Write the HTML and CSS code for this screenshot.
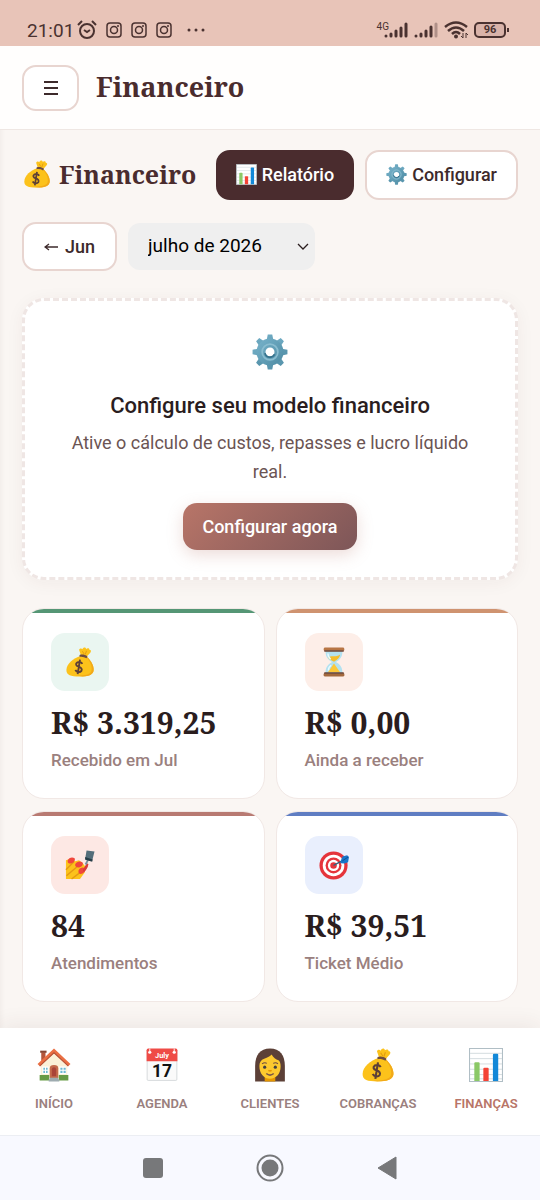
FILE: index.html
```html
<!DOCTYPE html>
<html lang="pt-BR">
<head>
    <meta charset="UTF-8">
    <meta name="viewport" content="width=device-width, initial-scale=1.0">
    <title>Financeiro</title>
    <link rel="stylesheet" href="styles.css">
</head>
<body>
    <!-- icons -->
    <svg class="sprite" aria-hidden="true">
        <linearGradient id="gearFill" x1="0" y1="0" x2="1" y2="1">
            <stop offset="0" stop-color="#78b3cb"/>
            <stop offset="1" stop-color="#4d8ba3"/>
        </linearGradient>
        <symbol id="bag" viewBox="0 0 64 64">
            <path d="M30 6c2-4 6-3 7-1 2-5 7-5 8-1 3-2 7-2 7 2 4 0 4 4 2 6l-8 9-12-3z" fill="#fcc21b"/>
            <path d="M37 9l4 6M46 8l-3 8" stroke="#e09a12" stroke-width="2" fill="none"/>
            <path d="M33 19C18 23 3 36 3 49c0 11 9 14 28 14s29-4 30-13c1-11-6-21-15-29z" fill="#fcc21b"/>
            <path d="M46 22c8 9 13 20 10 30-4 8-18 9-34 9 26 5 38-2 39-11 1-10-6-21-14-29z" fill="#f2a91a"/>
            <path d="M31 17c5-2 12-1 17 3l-2 4c-5-3-10-4-15-3z" fill="#6d4c41"/>
            <path d="M37 36c-2-4-7-5-11-3-4 3-3 7 3 9s8 5 6 9c-3 4-10 3-13-2M32 27l-5 31" stroke="#5d4037" stroke-width="4" fill="none"/>
        </symbol>
        <symbol id="chart" viewBox="0 0 64 64">
            <path d="M1 1h62v62H1z" fill="#fff" stroke="#b0bec5" stroke-width="2"/>
            <path d="M2 10h60M2 20h60M2 30h60M2 40h60M2 50h60M2 58h60" stroke="#b0bec5" stroke-width="1"/>
            <path d="M10 62V29q0-2 2-2h6q2 0 2 2v33z" fill="#8bc866"/>
            <path d="M27 62V39q0-2 2-2h6q2 0 2 2v23z" fill="#f44336"/>
            <path d="M45 62V13q0-2 2-2h6q2 0 2 2v49z" fill="#1288d8"/>
        </symbol>
        <symbol id="gear" viewBox="0 0 64 64">
            <g fill="url(#gearFill)">
                <path id="teeth" d="M26 11l2-10h8l2 10zM26 53l2 10h8l2-10zM11 26L1 28v8l10 2zM53 26l10 2v8l-10 2z"/>
                <use href="#teeth" transform="rotate(45 32 32)"/>
                <path fill-rule="evenodd" d="M32 8a24 24 0 1 0 0 48 24 24 0 0 0 0-48zm0 16a8 8 0 1 1 0 16 8 8 0 0 1 0-16z"/>
            </g>
            <circle cx="32" cy="32" r="14" fill="none" stroke="#8abdd0" stroke-width="3"/>
            <path d="M23 34a9 9 0 0 0 17 2" fill="none" stroke="#34718c" stroke-width="3"/>
        </symbol>
        <symbol id="hourglass" viewBox="0 0 64 64">
            <path d="M14 8h36c0 13-4 18-14 24 10 6 14 11 14 24H14c0-13 4-18 14-24C18 26 14 21 14 8z" fill="#b3e1f0"/>
            <path d="M19 22c8-5 17 1 26-6-1 8-7 11-12 15h-2c-5-3-9-4-12-9z" fill="#f5bd2c"/>
            <path d="M32 35l13 19H19z" fill="#fbc83a"/>
            <path d="M19 14c0 6 2 9 6 12M20 50c0-6 3-9 6-11" fill="none" stroke="#e8fbff" stroke-width="3"/>
            <rect x="10" y="1" width="44" height="8" rx="3" fill="#b87544"/>
            <rect x="11" y="7" width="42" height="3" rx="1" fill="#6d4c41"/>
            <rect x="10" y="55" width="44" height="8" rx="3" fill="#a3683d"/>
            <rect x="11" y="54" width="42" height="3" rx="1" fill="#6d4c41"/>
        </symbol>
        <symbol id="nails" viewBox="0 0 64 64">
            <path d="M2 62V22l10-4 10 6 8-2 8 6 6 8-2 12-10 14z" fill="#fcc21b"/>
            <path d="M2 42l17-17M3 55l26-22M14 62l22-17" stroke="#e59a12" stroke-width="3" fill="none"/>
            <path d="M6 22c2-6 10-8 15-4 1 6-4 11-12 11-3-1-4-4-3-7zM22 30c3-6 11-7 16-3 1 6-4 11-12 10-4-1-5-4-4-7zM29 43c3-6 9-7 14-4 2 6-3 12-10 12-4-1-5-4-4-8z" fill="#f0463c"/>
            <path d="M38 42c3-6 6-8 8-14l4 2c-1 8-5 14-10 17z" fill="#d93a3a"/>
            <path d="M44 31l5-10" stroke="#78909c" stroke-width="4"/>
            <path d="M46 1l17 2-5 20-15-4z" fill="#546e7a"/>
            <path d="M43 15l16 5-1 5-15-4z" fill="#263e48"/>
        </symbol>
        <symbol id="target" viewBox="0 0 64 64">
            <circle cx="31" cy="33" r="30" fill="#e5343b"/>
            <circle cx="31" cy="33" r="23" fill="#fff"/>
            <circle cx="31" cy="33" r="17" fill="#e5343b"/>
            <circle cx="31" cy="33" r="12" fill="#fff"/>
            <circle cx="31" cy="33" r="7" fill="#e5343b"/>
            <path d="M31 33l20-11" stroke="#35657c" stroke-width="3"/>
            <path d="M46 24l4-10 10-3 4 4-2 11-8 3-8-1z" fill="#1976c9"/>
            <path d="M50 23l12-8" stroke="#0d4f91" stroke-width="2"/>
        </symbol>
        <symbol id="house" viewBox="0 0 64 64">
            <path d="M8 8h8v16H8z" fill="#b5553a"/>
            <path d="M6 5h12v4H6z" fill="#874431"/>
            <path d="M7 27L32 5l25 22v30H7z" fill="#fbf1d8"/>
            <path d="M1 30L32 1l31 29-4 4L32 9 5 34z" fill="#ea6f43"/>
            <path d="M5 34L32 9l27 25" fill="none" stroke="#b54d33" stroke-width="2"/>
            <path d="M10 35h12v14H10zM42 35h13v14H42z" fill="#fff"/>
            <path d="M12 37h3v4h-3zM17 37h3v4h-3zM12 43h3v4h-3zM17 43h3v4h-3zM44 37h4v4h-4zM50 37h4v4h-4zM44 43h4v4h-4zM50 43h4v4h-4z" fill="#6fb9cf"/>
            <path d="M24 57V38q0-6 8-6t8 6v19z" fill="#c46a4b"/>
            <path d="M28 53V40q0-4 4-4t4 4v13z" fill="#a94438"/>
            <path d="M5 51h18v10H5zM41 51h18v10H41z" fill="#679b45"/>
            <path d="M24 56h16v3h2v4H22v-4h2z" fill="#9eabb0"/>
        </symbol>
        <symbol id="woman" viewBox="0 0 64 64">
            <path d="M32 1C13 1 4 14 4 34v29h56V34C60 14 51 1 32 1z" fill="#5c4037"/>
            <path d="M22 50h20v13H22z" fill="#e59600"/>
            <path d="M12 34c0-7 3-12 9-14 7-2 11-5 14-8 3 6 8 9 13 11 3 2 4 6 4 12 0 14-9 23-20 23S12 49 12 34z" fill="#fcc92f"/>
            <circle cx="22" cy="36" r="3" fill="#404040"/>
            <circle cx="42" cy="36" r="3" fill="#404040"/>
            <path d="M17 30q5-4 9-1M38 29q5-3 9 1" fill="none" stroke="#6d4c41" stroke-width="2"/>
            <path d="M29 42q3 2 6 0" fill="none" stroke="#e59600" stroke-width="3"/>
            <path d="M25 48q7 6 14 0" fill="none" stroke="#795548" stroke-width="3"/>
        </symbol>
        <symbol id="insta" viewBox="0 0 16 16">
            <g fill="none" stroke="currentColor" stroke-width="1.5">
                <rect x="1" y="1" width="14" height="14" rx="3"/>
                <circle cx="8" cy="8" r="3.5"/>
            </g>
            <circle cx="12" cy="4" r="1" fill="currentColor"/>
        </symbol>
    </svg>

    <div class="status-bar">
        <div class="status-left">
            <span class="clock">21:01</span>
            <svg class="alarm" viewBox="0 0 20 20">
                <g fill="none" stroke="currentColor" stroke-width="2">
                    <circle cx="10" cy="11" r="7"/>
                    <path d="M1 5l4-4M19 5l-4-4M7 10l3 2 3-2"/>
                </g>
            </svg>
            <svg class="insta"><use href="#insta"/></svg>
            <svg class="insta"><use href="#insta"/></svg>
            <svg class="insta"><use href="#insta"/></svg>
            <svg class="more" viewBox="0 0 18 4" fill="currentColor">
                <circle cx="2" cy="2" r="1.5"/><circle cx="9" cy="2" r="1.5"/><circle cx="16" cy="2" r="1.5"/>
            </svg>
        </div>
        <div class="status-right">
            <span class="network">4G</span>
            <svg class="signal" viewBox="0 0 24 16" stroke="currentColor" stroke-width="3" stroke-linecap="round">
                <path d="M2 14v0M7 14v-2M12 14V9M17 14V6M22 14V2"/>
            </svg>
            <svg class="signal signal-second" viewBox="0 0 24 16" stroke="currentColor" stroke-width="3" stroke-linecap="round">
                <path d="M2 14v0M7 14v-2M12 14V9M17 14V5"/>
                <path d="M22 14V2" opacity=".35"/>
            </svg>
            <svg class="wifi" viewBox="0 0 24 18">
                <g fill="none" stroke="currentColor" stroke-width="2.5">
                    <path d="M1 6q11-9 22 0M4 10q8-7 16 0M8 13q4-4 8 0"/>
                </g>
                <circle cx="12" cy="15.5" r="2" fill="currentColor"/>
                <path d="M19 12v5l-2-2M22 17v-5l2 2" stroke="currentColor" fill="none"/>
            </svg>
            <span class="battery">96</span>
        </div>
    </div>

    <header class="topbar">
        <button type="button" class="btn menu-btn" aria-label="Menu">
            <svg viewBox="0 0 14 14" stroke="currentColor" stroke-width="2"><path d="M0 1h14M0 7h14M0 13h14"/></svg>
        </button>
        <h1 class="topbar-title">Financeiro</h1>
    </header>

    <main class="page">
        <div class="page-header">
            <h2 class="page-title"><svg class="title-icon"><use href="#bag"/></svg>Financeiro</h2>
            <button type="button" class="btn btn-dark"><svg class="btn-icon"><use href="#chart"/></svg>Relatório</button>
            <button type="button" class="btn"><svg class="btn-icon"><use href="#gear"/></svg>Configurar</button>
        </div>

        <div class="month-nav">
            <button type="button" class="btn month-btn"><svg class="arrow" viewBox="0 0 14 8"><path d="M14 4H2M5 1L1 4l4 3" fill="none" stroke="currentColor" stroke-width="1.3"/></svg>Jun</button>
            <div class="month-field">
                <select class="month-select" aria-label="Mês">
                    <option>julho de 2026</option>
                </select>
                <svg class="chevron" viewBox="0 0 12 7"><path d="M1 1l5 5 5-5" fill="none" stroke="currentColor" stroke-width="1.3"/></svg>
            </div>
        </div>

        <section class="setup">
            <svg class="setup-icon"><use href="#gear"/></svg>
            <h3>Configure seu modelo financeiro</h3>
            <p>Ative o cálculo de custos, repasses e lucro líquido real.</p>
            <button type="button" class="setup-btn">Configurar agora</button>
        </section>

        <section class="stats">
            <div class="stat green">
                <div class="stat-icon"><svg><use href="#bag"/></svg></div>
                <div class="stat-value">R$ 3.319,25</div>
                <div class="stat-label">Recebido em Jul</div>
            </div>
            <div class="stat orange">
                <div class="stat-icon"><svg><use href="#hourglass"/></svg></div>
                <div class="stat-value">R$ 0,00</div>
                <div class="stat-label">Ainda a receber</div>
            </div>
            <div class="stat rose">
                <div class="stat-icon"><svg><use href="#nails"/></svg></div>
                <div class="stat-value">84</div>
                <div class="stat-label">Atendimentos</div>
            </div>
            <div class="stat blue">
                <div class="stat-icon"><svg><use href="#target"/></svg></div>
                <div class="stat-value">R$ 39,51</div>
                <div class="stat-label">Ticket Médio</div>
            </div>
        </section>
    </main>

    <nav class="bottom-nav">
        <a href="#inicio"><svg><use href="#house"/></svg>INÍCIO</a>
        <a href="#agenda">
            <svg viewBox="0 0 64 64">
                <rect x="4" y="3" width="56" height="58" rx="2" fill="#fafafa" stroke="#b8bfc2"/>
                <path d="M3 4q0-3 3-3h52q3 0 3 3v21H3z" fill="#ef4b46"/>
                <circle cx="9" cy="8" r="3" fill="#fff"/>
                <circle cx="55" cy="8" r="3" fill="#fff"/>
                <path d="M9 1v6M55 1v6" stroke="#fbe3df" stroke-width="2"/>
                <text x="32" y="18" class="cal-month">July</text>
                <text x="32" y="55" class="cal-day">17</text>
            </svg>AGENDA</a>
        <a href="#clientes"><svg><use href="#woman"/></svg>CLIENTES</a>
        <a href="#cobrancas"><svg><use href="#bag"/></svg>COBRANÇAS</a>
        <a href="#financas" class="active"><svg><use href="#chart"/></svg>FINANÇAS</a>
    </nav>

    <div class="system-nav">
        <button type="button" aria-label="Recentes"><svg viewBox="0 0 28 28"><rect x="4" y="4" width="20" height="20" rx="3" fill="currentColor"/></svg></button>
        <button type="button" aria-label="Tela inicial"><svg viewBox="0 0 28 28"><circle cx="14" cy="14" r="12.5" fill="none" stroke="currentColor" stroke-width="2"/><circle cx="14" cy="14" r="8.5" fill="currentColor"/></svg></button>
        <button type="button" aria-label="Voltar"><svg viewBox="0 0 28 28"><path d="M5 14L23 3v22z" fill="currentColor" stroke="currentColor" stroke-linejoin="round"/></svg></button>
    </div>
</body>
</html>
```
FILE: styles.css
```css
*{
    padding: 0;
    margin: 0;
    box-sizing: border-box;
}
body{
    min-height: 100vh;
    display: flex;
    flex-direction: column;
    background-color: #faf6f3;
    color: #2a1d1e;
    font-family: Roboto, "Noto Sans", sans-serif;
    font-size: 18px;
}
svg{
    display: block;
    flex-shrink: 0;
}
button{
    font-family: inherit;
    cursor: pointer;
}
.sprite{
    position: absolute;
    width: 0;
    height: 0;
}

/* status bar */
.status-bar{
    height: 46px;
    padding: 14px 34px 0 27px;
    display: flex;
    justify-content: space-between;
    align-items: center;
    background-color: #e8c4b8;
    color: #4a3230;
}
.status-left,.status-right{
    display: flex;
    align-items: center;
}
.status-left{
    gap: 9px;
}
.clock{
    font-size: 19px;
}
.alarm{
    width: 20px;
    height: 20px;
    margin-left: -6px;
}
.insta{
    width: 16px;
    height: 16px;
}
.more{
    width: 18px;
    height: 4px;
    margin-left: 6px;
}
.network{
    font-size: 10px;
    align-self: flex-start;
    margin-right: -5px;
}
.signal{
    width: 24px;
    height: 16px;
}
.signal-second{
    margin-left: 6px;
}
.wifi{
    width: 24px;
    height: 18px;
    margin: 0 6px;
}
.battery{
    position: relative;
    width: 32px;
    height: 16px;
    border: solid 2px #4a3230;
    border-radius: 5px;
    background-color: #d9b3a9;
    font-size: 11px;
    font-weight: 700;
    line-height: 12px;
    text-align: center;
}
.battery::after{
    content: '';
    position: absolute;
    right: -5px;
    top: 4px;
    width: 2px;
    height: 4px;
    background-color: #4a3230;
}

/* header */
.topbar{
    padding: 19px 22px 18px;
    display: flex;
    align-items: center;
    gap: 17px;
    background-color: #fffefd;
    border-bottom: solid 1px #efe7e3;
}
.topbar-title,.page-title,.stat-value{
    font-family: "Noto Serif", "DejaVu Serif Condensed", "DejaVu Serif", serif;
    font-weight: 700;
}
.topbar-title{
    padding-bottom: 2px;
    font-size: 27px;
    line-height: 36px;
    color: #4a2c2e;
}
.btn{
    height: 50px;
    padding: 0 19px 2px;
    display: flex;
    align-items: center;
    justify-content: center;
    gap: 5px;
    border: solid 2px #e8d5d0;
    border-radius: 14px;
    background-color: #fff;
    color: #3d2a2b;
    font-size: 18px;
    font-weight: 500;
    white-space: nowrap;
}
.btn-dark{
    padding: 0 18px 2px;
    border-color: #4a2c2e;
    background-color: #4a2c2e;
    color: #fff;
}
.btn-icon{
    width: 21px;
    height: 21px;
}
.menu-btn{
    width: 57px;
    height: 46px;
    padding: 0;
}
.menu-btn svg{
    width: 14px;
    height: 14px;
}

/* content */
.page{
    flex: 1;
    padding: 20px 22px 26px;
    box-shadow: inset 5px 0 5px -4px rgba(74,44,46,.06);
}
.page-header{
    display: flex;
    align-items: center;
    gap: 11px;
}
.page-title{
    flex: 1;
    display: flex;
    align-items: center;
    gap: 7px;
    padding-bottom: 2px;
    font-size: 25px;
    line-height: 36px;
    color: #4a2c2e;
}
.title-icon{
    width: 30px;
    height: 28px;
}
.month-nav{
    margin: 22px 0 27px;
    display: flex;
    align-items: center;
    gap: 11px;
}
.month-btn{
    height: 49px;
    padding: 0 20px;
    gap: 7px;
}
.arrow{
    width: 14px;
    height: 8px;
}
.month-field{
    position: relative;
}
.month-select{
    appearance: none;
    height: 47px;
    padding: 0 53px 2px 20px;
    border: 0;
    border-radius: 12px;
    background-color: #efefef;
    color: #000;
    font-family: inherit;
    font-size: 19px;
}
.chevron{
    position: absolute;
    right: 6px;
    top: 20px;
    width: 12px;
    height: 7px;
    pointer-events: none;
}
.setup{
    padding: 33px 40px 27px;
    display: flex;
    flex-direction: column;
    align-items: center;
    border: dashed 3px #efe6e4;
    border-radius: 22px;
    background-color: #fff;
    box-shadow: 0 3px 18px rgba(74,44,46,.05);
    text-align: center;
}
.setup-icon{
    width: 36px;
    height: 36px;
}
.setup h3{
    margin: 22px 0 8px;
    font-size: 22px;
    font-weight: 500;
    line-height: 28px;
}
.setup p{
    margin-bottom: 17px;
    color: #6b5453;
    line-height: 29px;
}
.setup-btn{
    height: 47px;
    padding: 0 19px;
    border: 0;
    border-radius: 14px;
    background: linear-gradient(135deg, #b87568, #7d5658);
    box-shadow: 0 5px 16px rgba(184,117,104,.25);
    color: #fff;
    font-size: 18px;
    font-weight: 500;
}

/* stat cards */
.stats{
    margin-top: 28px;
    display: grid;
    grid-template-columns: 1fr 1fr;
    gap: 12px 11px;
}
.stat{
    position: relative;
    overflow: hidden;
    padding: 24px 28px 26px;
    border: solid 1px #f1e8e5;
    border-radius: 22px;
    background-color: #fff;
}
.stat::before{
    content: '';
    position: absolute;
    left: 0;
    right: 0;
    top: 0;
    height: 4px;
}
.stat-icon{
    width: 58px;
    height: 58px;
    display: flex;
    align-items: center;
    justify-content: center;
    border-radius: 14px;
}
.stat-icon svg{
    width: 30px;
    height: 30px;
}
.stat-value{
    margin: 13px 0 6px;
    font-size: 30px;
    line-height: 38px;
    white-space: nowrap;
}
.stat-label{
    color: #9a807e;
    font-size: 17px;
    font-weight: 500;
    line-height: 24px;
}
.green::before{
    background-color: #559675;
}
.green .stat-icon{
    background-color: #eaf6f1;
}
.orange::before{
    background-color: #cf9370;
}
.orange .stat-icon{
    background-color: #fdeee8;
}
.rose::before{
    background-color: #b87a72;
}
.rose .stat-icon{
    background-color: #fde8e4;
}
.blue::before{
    background-color: #5f7dc2;
}
.blue .stat-icon{
    background-color: #e9effd;
}

/* bottom navigation */
.bottom-nav{
    padding: 20px 0 23px;
    display: grid;
    grid-template-columns: repeat(5, 1fr);
    background-color: #fff;
    box-shadow: 0 -4px 20px rgba(74,44,46,.07);
}
.bottom-nav a{
    display: flex;
    flex-direction: column;
    align-items: center;
    gap: 14px;
    color: #9a807e;
    font-size: 13px;
    font-weight: 600;
    line-height: 16px;
    text-decoration: none;
}
.bottom-nav svg{
    width: 34px;
    height: 34px;
}
.bottom-nav .active{
    color: #b87568;
}
.cal-month{
    font-size: 14px;
    font-weight: 700;
    fill: #fff;
    text-anchor: middle;
}
.cal-day{
    font-size: 33px;
    font-weight: 700;
    fill: #111;
    text-anchor: middle;
}
.system-nav{
    height: 65px;
    display: flex;
    align-items: center;
    justify-content: center;
    gap: 89px;
    border-top: solid 1px #eceef3;
    background-color: #f8f9ff;
}
.system-nav button{
    border: 0;
    background: none;
    color: #77787a;
}
.system-nav svg{
    width: 28px;
    height: 28px;
}
```
